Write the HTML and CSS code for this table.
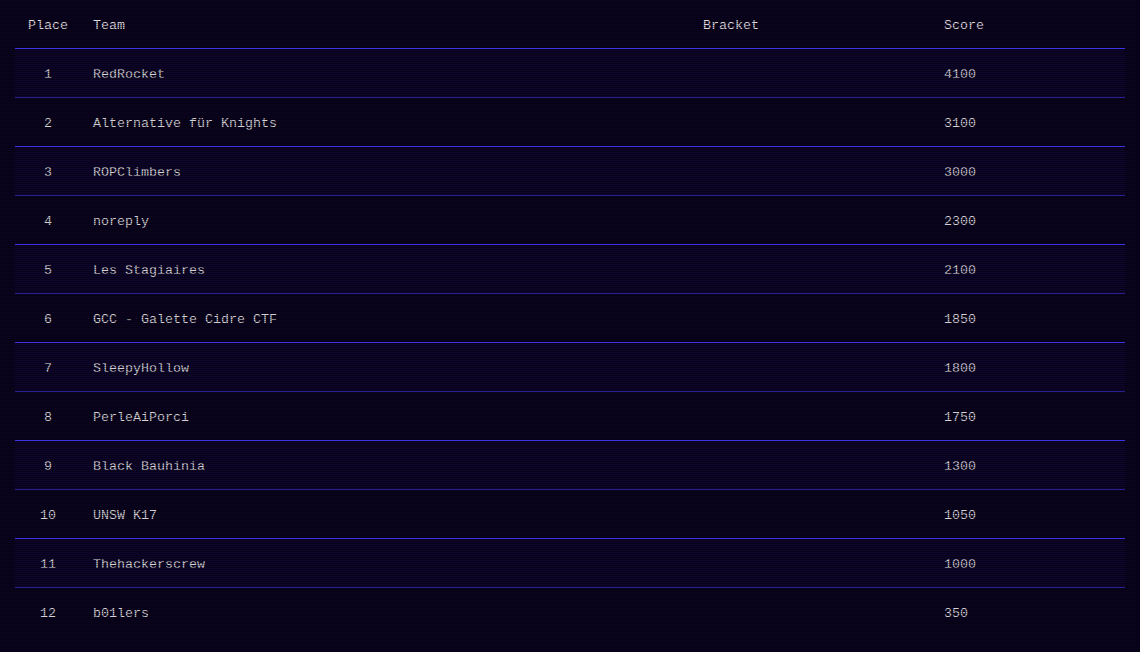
FILE: index.html
```html
<!DOCTYPE html>
<html>
<head>
<meta charset="utf-8">
<link rel="stylesheet" href="styles.css">
</head>
<body>
<div class="board">
  <div class="row head">
    <div class="cell place">Place</div>
    <div class="cell">Team</div>
    <div class="cell">Bracket</div>
    <div class="cell">Score</div>
  </div>
  <div class="row odd"><div class="cell place">1</div><div class="cell">RedRocket</div><div class="cell"></div><div class="cell">4100</div></div>
  <div class="row"><div class="cell place">2</div><div class="cell">Alternative für Knights</div><div class="cell"></div><div class="cell">3100</div></div>
  <div class="row odd"><div class="cell place">3</div><div class="cell">ROPClimbers</div><div class="cell"></div><div class="cell">3000</div></div>
  <div class="row"><div class="cell place">4</div><div class="cell">noreply</div><div class="cell"></div><div class="cell">2300</div></div>
  <div class="row odd"><div class="cell place">5</div><div class="cell">Les Stagiaires</div><div class="cell"></div><div class="cell">2100</div></div>
  <div class="row"><div class="cell place">6</div><div class="cell">GCC - Galette Cidre CTF</div><div class="cell"></div><div class="cell">1850</div></div>
  <div class="row odd"><div class="cell place">7</div><div class="cell">SleepyHollow</div><div class="cell"></div><div class="cell">1800</div></div>
  <div class="row"><div class="cell place">8</div><div class="cell">PerleAiPorci</div><div class="cell"></div><div class="cell">1750</div></div>
  <div class="row odd"><div class="cell place">9</div><div class="cell">Black Bauhinia</div><div class="cell"></div><div class="cell">1300</div></div>
  <div class="row"><div class="cell place">10</div><div class="cell">UNSW K17</div><div class="cell"></div><div class="cell">1050</div></div>
  <div class="row odd"><div class="cell place">11</div><div class="cell">Thehackerscrew</div><div class="cell"></div><div class="cell">1000</div></div>
  <div class="row last"><div class="cell place">12</div><div class="cell">b01lers</div><div class="cell"></div><div class="cell">350</div></div>
</div>
<div class="scanlines"></div>
</body>
</html>
```
FILE: styles.css
```css
html, body {
  margin: 0;
  padding: 0;
  background: #0b0420;
  height: 100%;
}
body {
  padding: 0 15px;
  font-family: "Liberation Mono", "DejaVu Sans Mono", monospace;
  font-size: 13.33px;
  color: #d4d2d8;
  overflow: hidden;
}
.board {
  display: flex;
  flex-direction: column;
}
.row {
  display: grid;
  grid-template-columns: 66px 610px 241px 1fr;
  height: 48px;
  align-items: center;
  border-bottom: 1px solid #3e33e6;
}
.row.last {
  border-bottom: none;
}
.row.odd {
  background: rgba(30, 14, 90, 0.18);
}
.head {
  color: #e0dee2;
}
.cell {
  padding: 2px 12px 0;
  white-space: nowrap;
}
.cell.place {
  text-align: center;
  padding: 2px 0 0;
}
.scanlines {
  position: fixed;
  inset: 0;
  pointer-events: none;
  background: repeating-linear-gradient(to bottom, transparent 0 1px, rgba(0, 0, 0, 0.38) 1px 2px);
}
```
